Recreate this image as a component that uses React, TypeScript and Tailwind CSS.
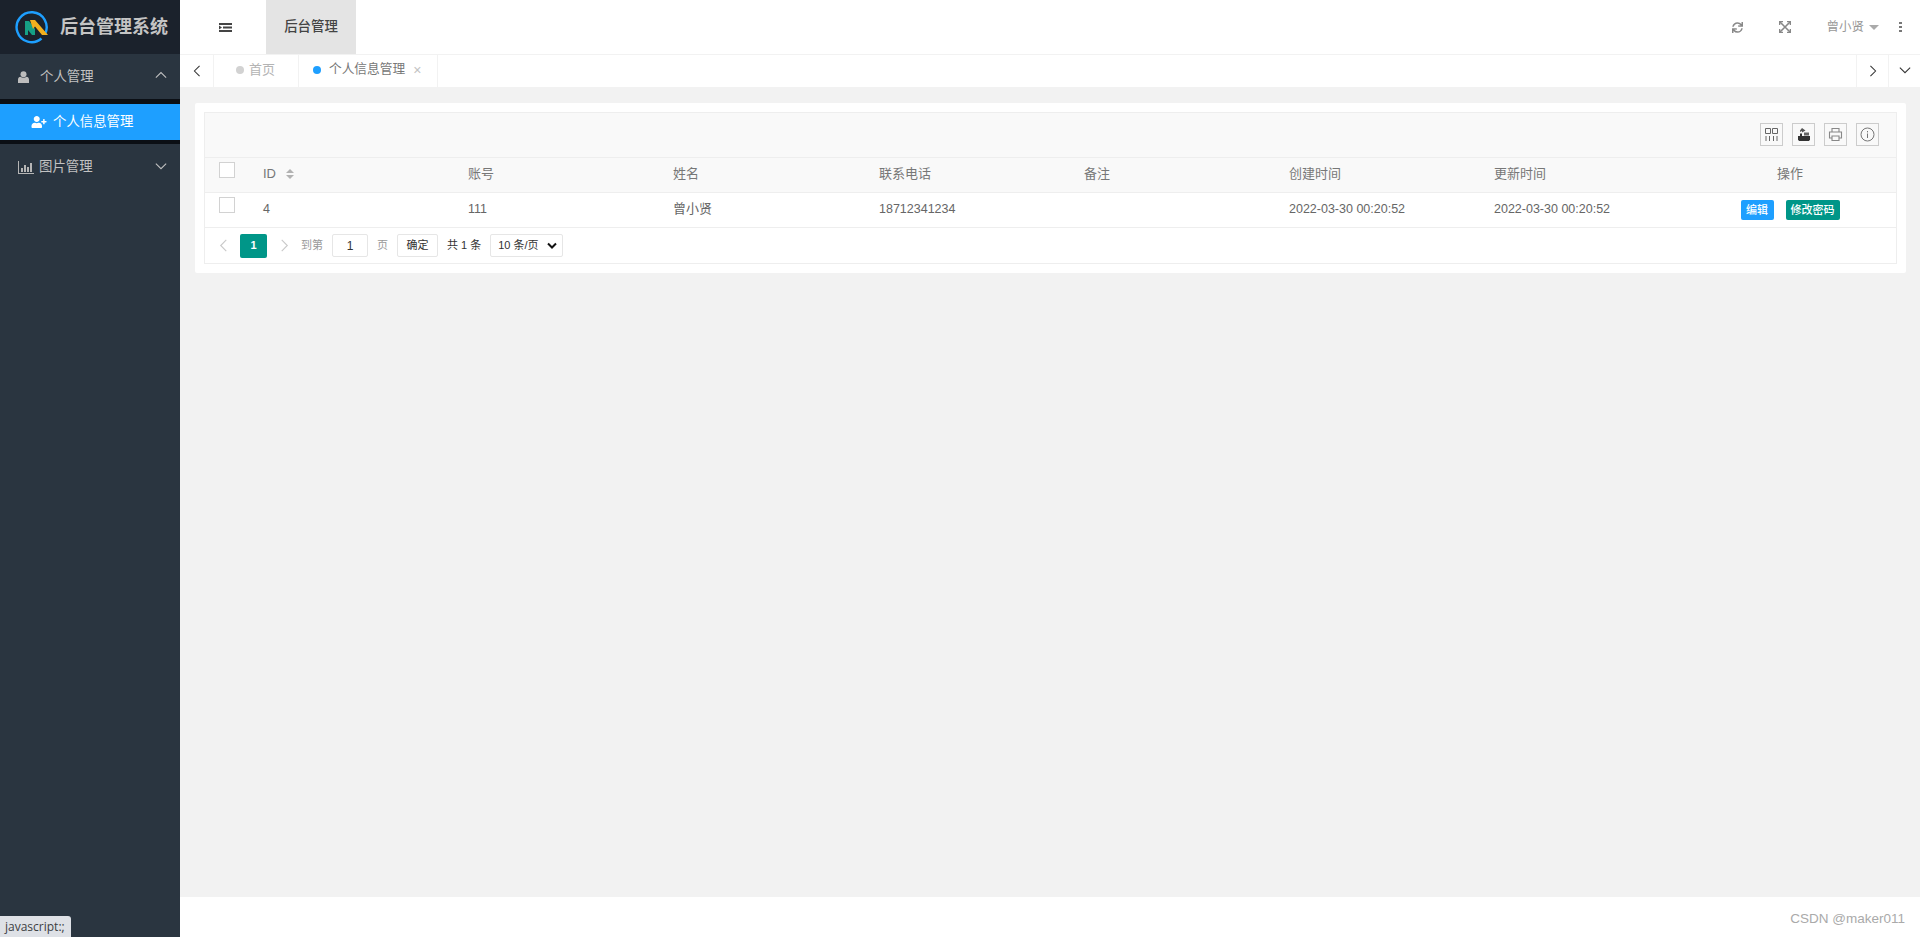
import React from "react";
import { FaUserPlus, FaSync } from "react-icons/fa";

const cols = "grid grid-cols-[43px_205px_205px_206px_205px_205px_205px_205px_1fr] items-center";
const font = { fontFamily: '"Liberation Sans","Noto Sans CJK SC",sans-serif' };

function Chevron({ dir, className }: { dir: "l" | "r" | "u" | "d"; className?: string }) {
  const d = { l: "M9 1 L3 7 L9 13", r: "M3 1 L9 7 L3 13", u: "M1 9 L7 3 L13 9", d: "M1 3 L7 9 L13 3" }[dir];
  return (
    <svg width="14" height="14" viewBox={dir === "l" || dir === "r" ? "-1 0 14 14" : "0 0 14 14"} fill="none" stroke="currentColor" strokeWidth="1.2" className={className}>
      <path d={d} />
    </svg>
  );
}

function Logo() {
  return (
    <svg width="34" height="34" viewBox="0 0 34 34" fill="none">
      <path d="M26.5 28.5 A15 15 0 1 1 30 24" stroke="#1e9fff" strokeWidth="2.4" fill="none" />
      <path d="M10 25 L10 11 L14 11 L20 19 L20 25 L17 25 L13 20 L13 25 Z" fill="#16a085" />
      <path d="M15 10 L20 10 L33 25 L27 25 L20 16.5 L18 19 Z" fill="#f2b01e" />
    </svg>
  );
}

function ToolBtn({ children }: { children: React.ReactNode }) {
  return <div className="flex h-[23px] w-[23px] items-center justify-center border border-[#cccccc]">{children}</div>;
}

export default function App() {
  return (
    <div className="relative flex h-[937px] w-[1920px] overflow-hidden bg-[#f2f2f2] text-[14px] text-[#666666]" style={font}>
      <aside className="flex w-[180px] shrink-0 flex-col bg-[#2a3540]">
        <div className="flex h-[54px] items-center bg-[#1b222c] pl-[15px]">
          <Logo />
          <span className="ml-[11px] text-[18px] font-bold text-[#c4c4c4]">后台管理系统</span>
        </div>
        <div className="flex h-[45px] items-center pl-[18px] pr-[13px] pt-[1px] text-[#c2c2c2]">
          <svg width="11" height="12" viewBox="0 0 11 12" fill="#bdbdbd">
            <circle cx="5.5" cy="3.2" r="3" />
            <path d="M0 12V8.5C0 7 1.2 6 2.5 5.8 3.4 6.4 4.4 6.7 5.5 6.7S7.6 6.4 8.5 5.8C9.8 6 11 7 11 8.5V12Z" />
          </svg>
          <span className="ml-[11px] flex-1 text-[13.4px]">个人管理</span>
          <Chevron dir="u" className="h-[12px] w-[12px] -translate-y-[1px]" />
        </div>
        <div className="bg-[#0b0f15] pt-[5px] pb-[4px]">
          <div className="flex h-[36px] items-center bg-[#1e9fff] pl-[31px] text-white">
            <FaUserPlus className="h-[12px] w-[16px]" />
            <span className="ml-[6px] text-[13.4px]">个人信息管理</span>
          </div>
        </div>
        <div className="flex h-[45px] items-center pl-[18px] pr-[13px] pt-[1px] text-[#c2c2c2]">
          <svg width="16" height="13" viewBox="0 0 16 13" fill="#b5b5b5">
            <path d="M0 0h1v12h15v1H0z" />
            <path d="M3 7h2v4H3zM6 4h2v7H6zM9 6h2v5H9zM12 2h2v9h-2z" />
          </svg>
          <span className="ml-[5px] flex-1 text-[13.4px]">图片管理</span>
          <Chevron dir="d" className="h-[12px] w-[12px]" />
        </div>
      </aside>

      <main className="flex min-w-0 flex-1 flex-col">
        <header className="flex h-[54px] items-center bg-white">
          <div className="flex w-[86px] justify-center pl-[5px]">
            <svg width="13" height="9" viewBox="0 0 13 9" fill="#444444">
              <path d="M0 0h13v2H0zM4 3.5h9v2H4zM0 7h13v2H0zM0 2.5l3 2-3 2z" />
            </svg>
          </div>
          <div className="flex h-full w-[90px] items-center justify-center bg-[#e4e4e4] text-[13.4px] font-medium text-[#444444]">后台管理</div>
          <div className="flex-1" />
          <div className="flex items-center text-[#999999]">
            <FaSync className="mr-[36px] h-[11px] w-[11px] text-[#888888]" />
            <svg width="12" height="12" viewBox="0 0 12 12" className="mr-[35px]" fill="none" stroke="#888888" strokeWidth="1.6">
              <path d="M1 1 L11 11 M11 1 L1 11" />
              <path d="M0.5 4V0.5H4 M8 0.5H11.5V4 M0.5 8V11.5H4 M8 11.5H11.5V8" />
            </svg>
            <span className="text-[12.5px]">曾小贤</span>
            <span className="ml-[5px] mt-[1px] h-0 w-0 border-x-[5px] border-t-[5px] border-x-transparent border-t-[#aaaaaa]" />
            <span className="ml-[20px] mr-[18px] flex flex-col gap-[2px]">
              <i className="block h-[2px] w-[3px] bg-[#777777]" />
              <i className="block h-[2px] w-[3px] bg-[#777777]" />
              <i className="block h-[2px] w-[3px] bg-[#777777]" />
            </span>
          </div>
        </header>

        <nav className="flex h-[33px] items-stretch border-t border-[#f2f2f2] bg-white">
          <div className="flex w-[34px] items-center justify-center border-r border-[#f2f2f2] text-[#333333]">
            <Chevron dir="l" className="h-[12px] w-[12px]" />
          </div>
          <div className="flex w-[85px] items-center border-r border-[#f2f2f2] pl-[22px] pb-[3px] text-[13px] text-[#b4b4b4]">
            <span className="mr-[5px] h-[8px] w-[8px] rounded-full bg-[#d2d2d2]" />
            首页
          </div>
          <div className="flex w-[139px] items-center border-r border-[#f2f2f2] pl-[14px] pb-[3px] text-[12.7px] text-[#777777]">
            <span className="mr-[8px] h-[8px] w-[8px] rounded-full bg-[#1e9fff]" />
            个人信息管理
            <span className="ml-[8px] text-[14px] leading-none text-[#c2c2c2]">×</span>
          </div>
          <div className="flex-1" />
          <div className="flex w-[32px] items-center justify-center border-l border-[#f2f2f2] text-[#333333]">
            <Chevron dir="r" className="h-[12px] w-[12px]" />
          </div>
          <div className="flex w-[32px] items-center justify-center border-l border-[#f2f2f2] text-[#333333]">
            <Chevron dir="d" className="h-[12px] w-[12px]" />
          </div>
        </nav>

        <section className="flex-1 pl-[15px] pr-[14px] pt-[16px]">
          <div className="rounded-[2px] bg-white p-[9px]">
            <div className="border border-[#eeeeee] text-[12.5px]">
              <div className="flex h-[45px] items-center justify-end gap-[9px] border-b border-[#eeeeee] bg-[#f9f9f9] pr-[17px] pb-[2px]">
                <ToolBtn>
                  <svg width="15" height="15" viewBox="0 0 15 15" fill="none" stroke="#666666">
                    <path d="M1.5 1.5h5v5h-5zM8.5 1.5h5v5h-5zM2 9v5M5.5 9v5M9.5 9v5M13 9v5" />
                  </svg>
                </ToolBtn>
                <ToolBtn>
                  <svg width="15" height="15" viewBox="0 0 15 15" fill="#333333">
                    <path d="M2 9h12v3.500L13 14H3L2 12.500z" />
                    <path d="M4 6.500h2v2.500H4z" />
                    <path d="M6 1l3.500 2.500L6 5.500V4L4 5V3.500z" fill="#555555" />
                    <path d="M8 5.500h5v3H8z" fill="#666666" />
                  </svg>
                </ToolBtn>
                <ToolBtn>
                  <svg width="15" height="15" viewBox="0 0 15 15" fill="none" stroke="#888888" strokeWidth="1.1">
                    <path d="M4 5V1.500h7V5M4 11H1.500V5h12v6H11M4 9h7v4.500H4z" />
                  </svg>
                </ToolBtn>
                <ToolBtn>
                  <svg width="15" height="15" viewBox="0 0 15 15" fill="none" stroke="#777777">
                    <circle cx="7.5" cy="7.5" r="6.5" />
                    <path d="M7.500 6.500v4.500M7.500 4v1.400" />
                  </svg>
                </ToolBtn>
              </div>

              <div className={`${cols} h-[35px] border-b border-[#eeeeee] bg-[#f9f9f9] pb-[2px] text-[13px]`}>
                <span className="ml-[14px] h-[16px] w-[16px] -translate-y-[4px] border border-[#d2d2d2] bg-white" />
                <span className="flex items-center pl-[15px] text-[#777777]">
                  ID
                  <span className="ml-[10px] flex flex-col gap-[2px]">
                    <i className="block h-0 w-0 border-x-[4.5px] border-b-[4.5px] border-x-transparent border-b-[#b2b2b2]" />
                    <i className="block h-0 w-0 border-x-[4.5px] border-t-[4.5px] border-x-transparent border-t-[#b2b2b2]" />
                  </span>
                </span>
                <span className="pl-[15px] text-[#777777]">账号</span>
                <span className="pl-[15px] text-[#777777]">姓名</span>
                <span className="pl-[15px] text-[#777777]">联系电话</span>
                <span className="pl-[15px] text-[#777777]">备注</span>
                <span className="pl-[15px] text-[#777777]">创建时间</span>
                <span className="pl-[15px] text-[#777777]">更新时间</span>
                <span className="text-center text-[#777777]">操作</span>
              </div>

              <div className={`${cols} h-[35px] border-b border-[#eeeeee] bg-white pb-[2px]`}>
                <span className="ml-[14px] h-[16px] w-[16px] -translate-y-[4px] border border-[#d2d2d2] bg-white" />
                <span className="pl-[15px]">4</span>
                <span className="pl-[15px]">111</span>
                <span className="pl-[15px] text-[13px]">曾小贤</span>
                <span className="pl-[15px]">18712341234</span>
                <span className="pl-[15px]" />
                <span className="pl-[15px]">2022-03-30 00:20:52</span>
                <span className="pl-[15px]">2022-03-30 00:20:52</span>
                <span className="flex translate-y-[1px] justify-center gap-[12px]">
                  <span className="flex h-[20px] w-[33px] items-center justify-center rounded-[2px] bg-[#1e9fff] text-[11px] font-medium text-white">编辑</span>
                  <span className="flex h-[20px] w-[54px] items-center justify-center rounded-[2px] bg-[#009688] text-[11px] font-medium text-white">修改密码</span>
                </span>
              </div>

              <div className="flex h-[35px] items-center pl-[12px] text-[11px]">
                <Chevron dir="l" className="h-[13px] w-[13px] text-[#c9c9c9]" />
                <span className="ml-[10px] flex h-[24px] w-[27px] items-center justify-center rounded-[2px] bg-[#009688] font-bold text-white">1</span>
                <Chevron dir="r" className="ml-[11px] h-[13px] w-[13px] text-[#c9c9c9]" />
                <span className="ml-[10px] text-[#999999]">到第</span>
                <span className="ml-[9px] flex h-[23px] w-[36px] items-center justify-center rounded-[2px] border border-[#e6e6e6] text-[12px] text-[#333333]">1</span>
                <span className="ml-[9px] text-[#999999]">页</span>
                <span className="ml-[9px] flex h-[23px] w-[41px] items-center justify-center rounded-[2px] border border-[#e6e6e6] text-[#333333]">确定</span>
                <span className="ml-[9px] text-[#333333]">共 1 条</span>
                <span className="ml-[9px] flex h-[23px] w-[73px] items-center justify-between rounded-[2px] border border-[#e6e6e6] pl-[7px] pr-[5px] text-[#333333]">
                  10 条/页
                  <svg width="10" height="8" viewBox="0 0 10 8" fill="none" stroke="#111111" strokeWidth="2">
                    <path d="M1 1.500 L5 5.500 L9 1.500" />
                  </svg>
                </span>
              </div>
            </div>
          </div>
        </section>

        <footer className="flex h-[40px] items-end justify-end bg-white pb-[8px] pr-[15px] text-[13.5px] text-[#aaaaaa]">CSDN @maker011</footer>
      </main>

      <div className="absolute bottom-0 left-0 flex h-[21px] w-[71px] items-center rounded-tr-[3px] bg-[#dee1e6] pl-[5px] text-[12px] text-[#3c4043]" style={{ fontFamily: '"Open Sans","Noto Sans",sans-serif' }}>javascript:;</div>
    </div>
  );
}
